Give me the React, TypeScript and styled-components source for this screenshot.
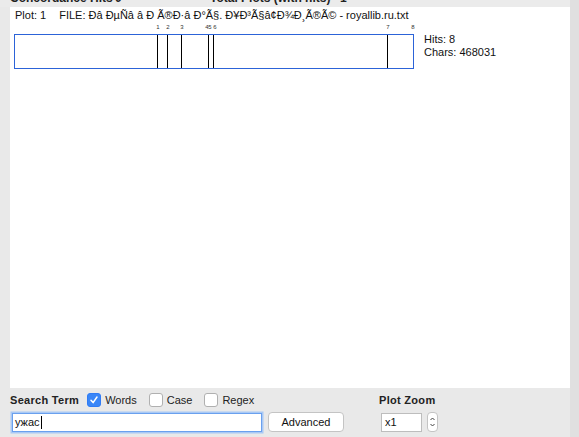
import React from "react";
import styled, { createGlobalStyle } from "styled-components";

const Global = createGlobalStyle`
  html, body { margin: 0; padding: 0; }
  body {
    width: 579px; height: 437px; overflow: hidden;
    background: #e9e9e9;
    font-family: "Liberation Sans", Arial, sans-serif;
    color: #111;
  }
`;

const Root = styled.div`
  display: flex;
  width: 579px;
  height: 437px;
`;

const Main = styled.div`
  flex: 1;
  display: flex;
  flex-direction: column;
  min-width: 0;
`;

const Strip = styled.div`
  width: 9px;
  background: #e0e0e0;
`;

const Tabs = styled.div`
  height: 7px;
  overflow: hidden;
  display: flex;
  padding-left: 10px;
  background: #ebebeb;
`;

const TabLabel = styled.span<{ $w: number }>`
  display: block;
  width: ${(p) => p.$w}px;
  margin-top: -8px;
  font-size: 12px;
  line-height: 13px;
  font-weight: bold;
  color: #222;
  white-space: nowrap;
`;

const Panel = styled.div`
  flex: 1;
  margin-left: 10px;
  background: #fff;
  padding: 2px 0 0 4px;
  display: flex;
  flex-direction: column;
`;

const PlotTitle = styled.div`
  font-size: 11px;
  line-height: 13px;
  display: flex;
  gap: 13px;
  padding-left: 1px;
  white-space: nowrap;
`;

const PlotRow = styled.div`
  display: flex;
  gap: 10px;
  margin-top: 1px;
`;

const PlotBlock = styled.div`
  width: 400px;
  position: relative;
  padding-top: 11px;
`;

const PlotBox = styled.div`
  height: 33px;
  border: 1.5px solid #2c63d8;
  position: relative;
`;

const HitLine = styled.div`
  position: absolute;
  top: 0;
  bottom: 0;
  width: 1px;
  background: #000;
`;

const HitNum = styled.span`
  position: absolute;
  top: 1px;
  font-size: 6px;
  line-height: 7px;
  color: #333;
  transform: translateX(-50%);
`;

const Stats = styled.div`
  font-size: 11px;
  line-height: 13px;
  padding-top: 10px;
`;

const Bottom = styled.div`
  height: 49px;
  padding-left: 10px;
  display: flex;
  background: #e9e9e9;
`;

const SearchCol = styled.div`
  display: flex;
  flex-direction: column;
  width: 369px;
`;

const RowTop = styled.div`
  display: flex;
  align-items: center;
  height: 23px;
`;

const Bold = styled.span`
  font-size: 11px;
  font-weight: bold;
  letter-spacing: 0.3px;
  color: #222;
`;

const Check = styled.span<{ $on?: boolean }>`
  width: 14px;
  height: 14px;
  box-sizing: border-box;
  border-radius: 3px;
  border: 1px solid ${(p) => (p.$on ? "#2f7bf5" : "#b0b0b0")};
  background: ${(p) => (p.$on ? "#3a86f7" : "#fff")};
  display: inline-flex;
  align-items: center;
  justify-content: center;
`;

const CheckItem = styled.label<{ $ml: number }>`
  display: flex;
  align-items: center;
  gap: 4px;
  margin-left: ${(p) => p.$ml}px;
  font-size: 11px;
  color: #222;
`;

const RowBottom = styled.div`
  display: flex;
  align-items: center;
  margin-top: 1px;
`;

const Input = styled.div`
  width: 250px;
  height: 19px;
  margin-left: 2px;
  box-sizing: border-box;
  border: 1px solid #6aa0ee;
  box-shadow: 0 0 0 1.5px #a9c9f5;
  background: #fff;
  font-size: 11px;
  display: flex;
  align-items: center;
  padding-left: 2px;
`;

const Caret = styled.span`
  display: inline-block;
  width: 1px;
  height: 13px;
  background: #000;
  margin-left: 1px;
`;

const Button = styled.div`
  width: 76px;
  height: 20px;
  margin-left: 6px;
  box-sizing: border-box;
  border: 1px solid #c4c4c4;
  border-radius: 4px;
  background: #fff;
  font-size: 11px;
  display: flex;
  align-items: center;
  justify-content: center;
`;

const ZoomCol = styled.div`
  display: flex;
  flex-direction: column;
`;

const ZoomRow = styled.div`
  display: flex;
  align-items: center;
  gap: 5px;
  margin-top: 1px;
  margin-left: 2px;
`;

const SmallInput = styled.div`
  width: 41px;
  height: 19px;
  box-sizing: border-box;
  border: 1px solid #bdbdbd;
  background: #fff;
  font-size: 11px;
  padding-left: 3px;
  display: flex;
  align-items: center;
`;

const Stepper = styled.div`
  width: 11px;
  height: 20px;
  box-sizing: border-box;
  border: 1px solid #c4c4c4;
  border-radius: 4px;
  background: #fff;
  display: flex;
  align-items: center;
  justify-content: center;
`;

const hits = [
  { x: 143, n: "1" },
  { x: 153, n: "2" },
  { x: 167, n: "3" },
  { x: 194, n: "4", lx: 192 },
  { x: 194, n: "5", lx: 195 },
  { x: 199, n: "6", lx: 200 },
  { x: 373, n: "7" },
  { x: 398, n: "8" },
];

export default function App() {
  return (
    <>
      <Global />
      <Root>
        <Main>
          <Tabs>
            <TabLabel $w={105}>Concordance Hits</TabLabel>
            <TabLabel $w={95}>0</TabLabel>
            <TabLabel $w={130}>Total Plots (with hits)</TabLabel>
            <TabLabel $w={20}>1</TabLabel>
          </Tabs>
          <Panel>
            <PlotTitle>
              <span>Plot: 1</span>
              <span>FILE: Ðâ ÐµÑâ â  Ð  Ã®Ð·â Ð°Ã§. Ð¥Ð³Ã§â¢Ð¾Ð¸Ã®Ã© - royallib.ru.txt</span>
            </PlotTitle>
            <PlotRow>
              <PlotBlock>
                {hits.map((h) => (
                  <HitNum key={h.n} style={{ left: (h.lx ?? h.x) + 1 }}>
                    {h.n}
                  </HitNum>
                ))}
                <PlotBox>
                  {hits.slice(0, 7).map((h) => (
                    <HitLine key={h.n} style={{ left: h.x - 1 }} />
                  ))}
                </PlotBox>
              </PlotBlock>
              <Stats>
                <div>Hits: 8</div>
                <div>Chars: 468031</div>
              </Stats>
            </PlotRow>
          </Panel>
          <Bottom>
            <SearchCol>
              <RowTop>
                <Bold>Search Term</Bold>
                <CheckItem $ml={8}>
                  <Check $on>
                    <svg width="10" height="10" viewBox="0 0 10 10">
                      <path d="M2 5.3 L4.1 7.6 L8 2" stroke="#fff" strokeWidth="1.5" fill="none" strokeLinecap="round" strokeLinejoin="round" />
                    </svg>
                  </Check>
                  Words
                </CheckItem>
                <CheckItem $ml={12}>
                  <Check />
                  Case
                </CheckItem>
                <CheckItem $ml={12}>
                  <Check />
                  Regex
                </CheckItem>
              </RowTop>
              <RowBottom>
                <Input>
                  ужас<Caret />
                </Input>
                <Button>Advanced</Button>
              </RowBottom>
            </SearchCol>
            <ZoomCol>
              <RowTop>
                <Bold>Plot Zoom</Bold>
              </RowTop>
              <ZoomRow>
                <SmallInput>x1</SmallInput>
                <Stepper>
                  <svg width="7" height="14" viewBox="0 0 7 14">
                    <path d="M1.5 5 L3.5 3 L5.5 5 M1.5 9 L3.5 11 L5.5 9" stroke="#444" strokeWidth="1" fill="none" />
                  </svg>
                </Stepper>
              </ZoomRow>
            </ZoomCol>
          </Bottom>
        </Main>
        <Strip />
      </Root>
    </>
  );
}
